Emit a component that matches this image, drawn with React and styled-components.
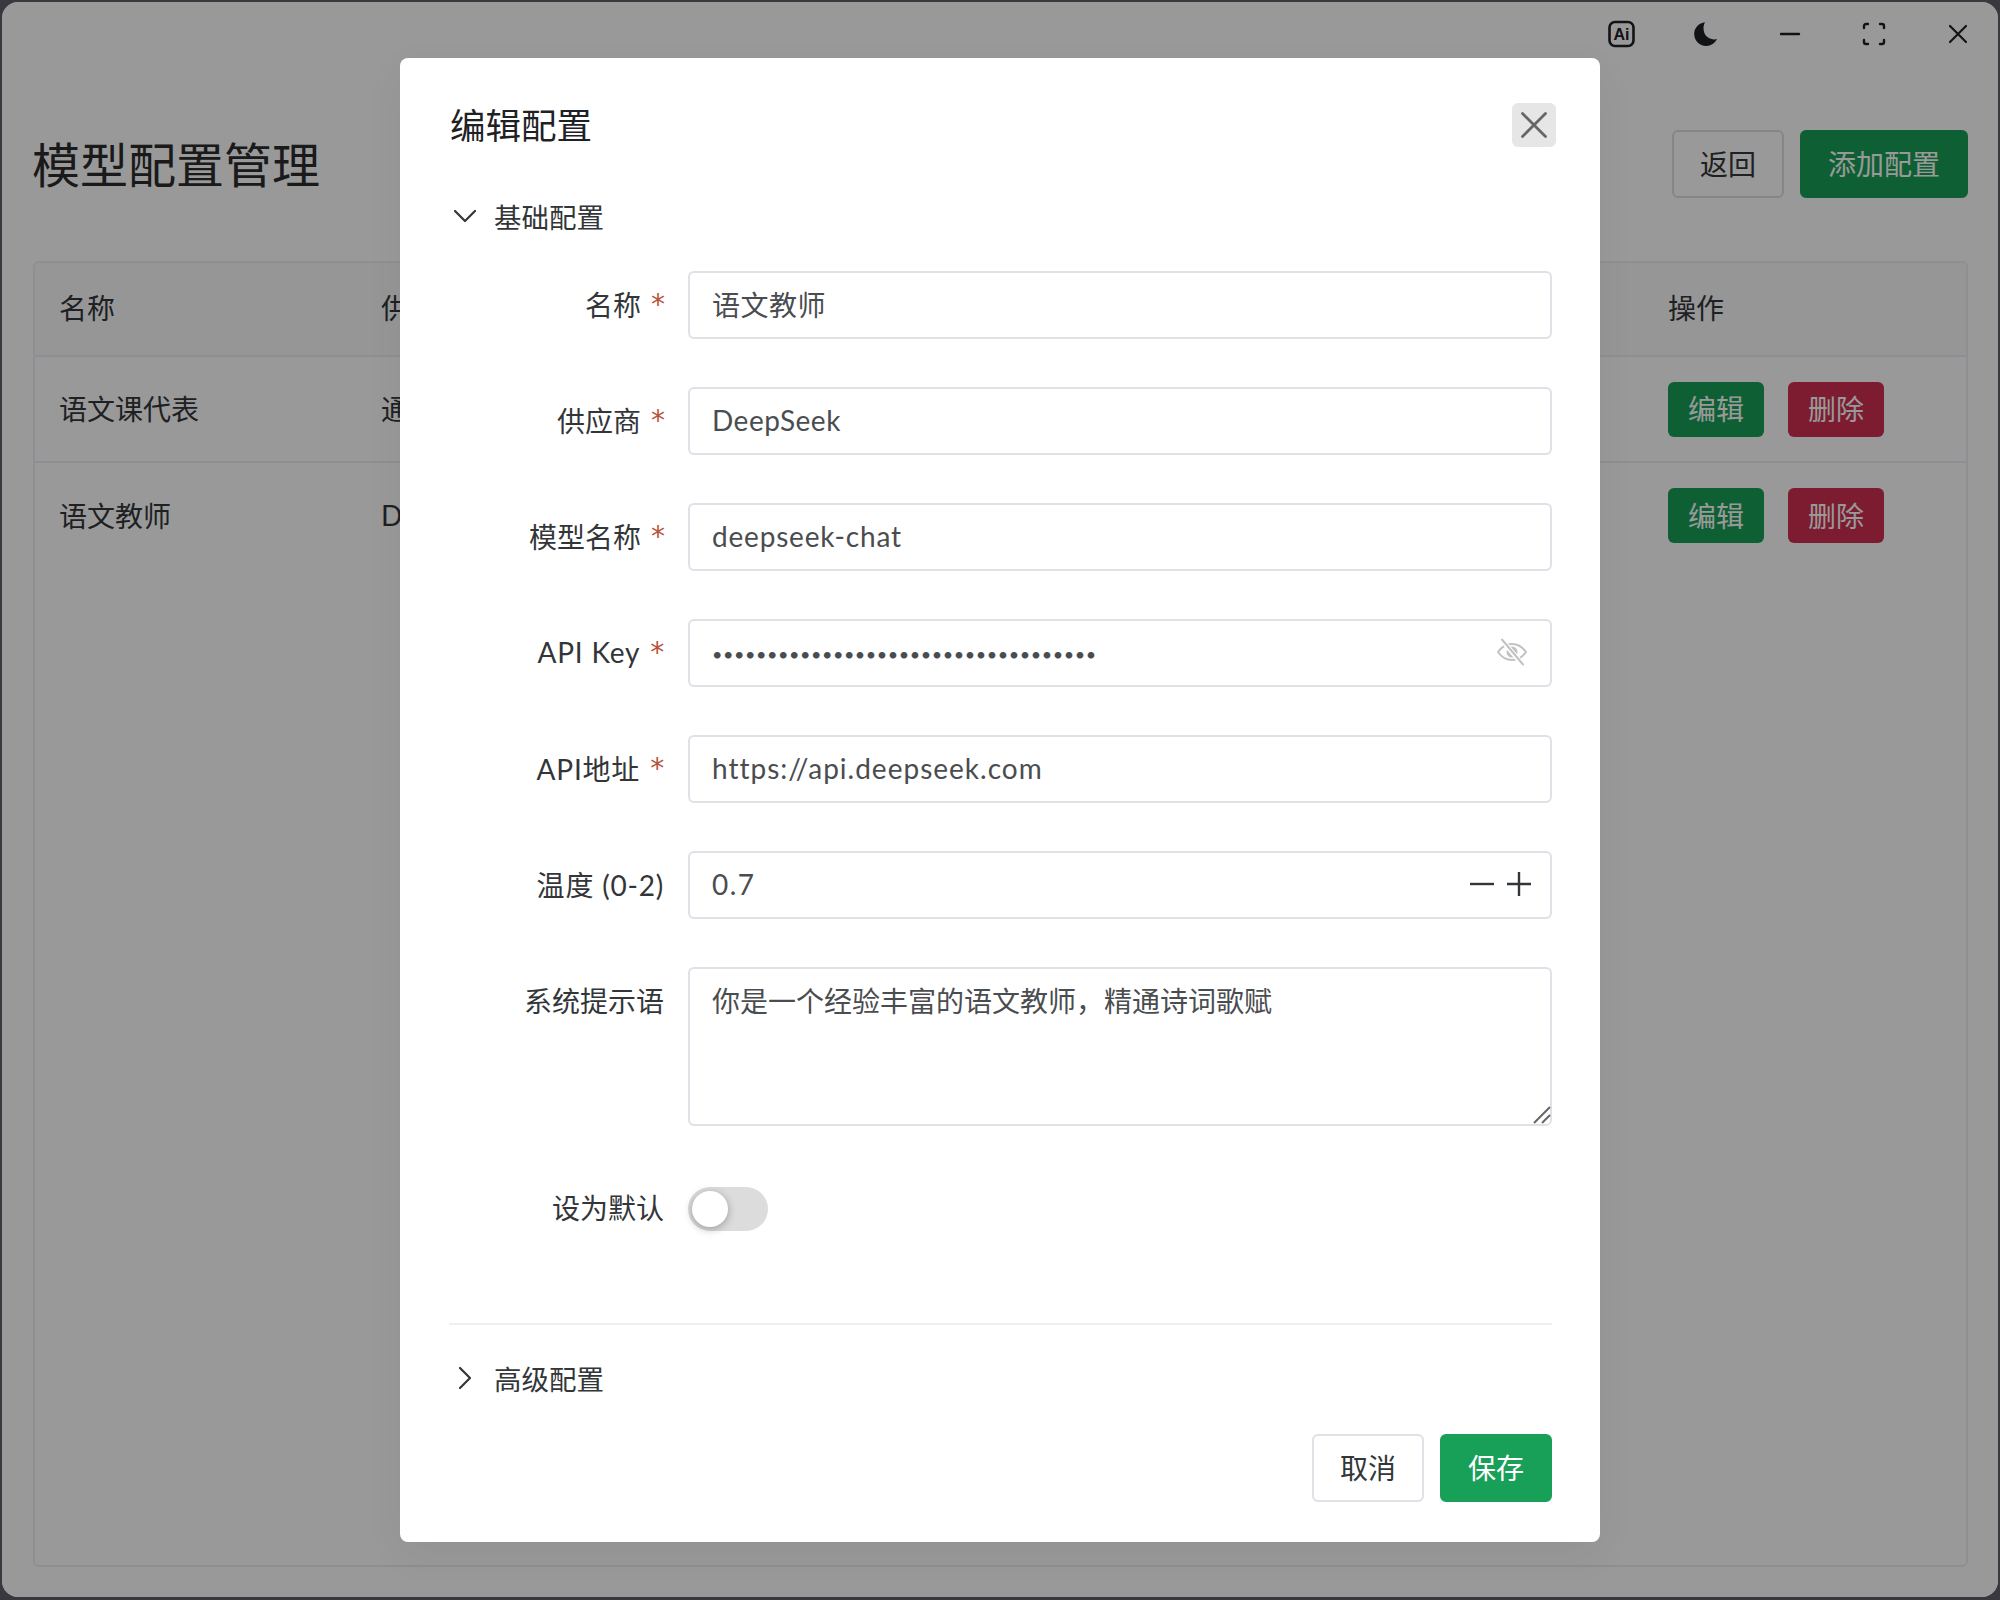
import React from "react";
import styled, { createGlobalStyle } from "styled-components";

const FONT = `Lato, "Noto Sans CJK SC", sans-serif`;

const GlobalStyle = createGlobalStyle`
  html, body {
    margin: 0;
    padding: 0;
    height: 100%;
    background: #38383e;
  }
  body {
    font-family: ${FONT};
    font-size: 28px;
    color: #333639;
  }
  #root {
    height: 100%;
  }
  * {
    box-sizing: border-box;
  }
`;

const MODELS = [
  { name: "语文课代表", provider: "通义千问" },
  { name: "语文教师", provider: "DeepSeek" },
];

// full-width comma, as in the original text
const PROMPT = "你是一个经验丰富的语文教师\uFF0C精通诗词歌赋";

export default function App() {
  return (
    <Shell>
      <GlobalStyle />
      <Win>
        <TitleBar>
          <WinBtn aria-label="ai">
            <svg width="30" height="30" viewBox="0 0 30 30">
              <rect x="2.5" y="3" width="24" height="24" rx="5.5" fill="none" stroke="currentColor" strokeWidth="2.6" />
              <text x="14.5" y="21" textAnchor="middle" fontFamily="Liberation Sans, sans-serif" fontSize="16" fontWeight="700" fill="currentColor">Ai</text>
            </svg>
          </WinBtn>
          <WinBtn aria-label="theme">
            <svg width="30" height="30" viewBox="0 0 30 30">
              <path d="M14 3.2C8 3.8 3.2 8.6 3.2 15c0 6.600 5.400 12 12 12 4.800 0 8.900-2.800 10.800-6.900-5.900 1.200-11-1.600-12.700-6.300C12 10 12.300 6 14 3.200Z" fill="currentColor" />
            </svg>
          </WinBtn>
          <WinBtn aria-label="minimize">
            <svg width="24" height="24" viewBox="0 0 24 24">
              <path d="M3 12h18" stroke="currentColor" strokeWidth="2.4" strokeLinecap="round" />
            </svg>
          </WinBtn>
          <WinBtn aria-label="fullscreen">
            <svg width="26" height="26" viewBox="0 0 26 26" fill="none" stroke="currentColor" strokeWidth="2.4" strokeLinecap="round">
              <path d="M7 3H5a2 2 0 0 0-2 2v2" />
              <path d="M19 3h2a2 2 0 0 1 2 2v2" />
              <path d="M3 19v2a2 2 0 0 0 2 2h2" />
              <path d="M23 19v2a2 2 0 0 1-2 2h-2" />
            </svg>
          </WinBtn>
          <WinBtn aria-label="close">
            <svg width="24" height="24" viewBox="0 0 24 24">
              <path d="M4 4l16 16M20 4L4 20" stroke="currentColor" strokeWidth="2.2" strokeLinecap="round" />
            </svg>
          </WinBtn>
        </TitleBar>

        <PageHeader>
          <PageTitle>模型配置管理</PageTitle>
          <Actions>
            <Button>返回</Button>
            <Button $primary $wide>添加配置</Button>
          </Actions>
        </PageHeader>

        <TableWrap>
          <Table>
            <colgroup>
              <col width="322" />
              <col />
              <col width="322" />
            </colgroup>
            <thead>
              <tr>
                <Th>名称</Th>
                <Th>供应商</Th>
                <Th>操作</Th>
              </tr>
            </thead>
            <tbody>
              {MODELS.map((m) => (
                <tr key={m.name}>
                  <Td>{m.name}</Td>
                  <Td>{m.provider}</Td>
                  <Td>
                    <RowActions>
                      <SmallButton $color="#18a058">编辑</SmallButton>
                      <SmallButton $color="#d03050">删除</SmallButton>
                    </RowActions>
                  </Td>
                </tr>
              ))}
            </tbody>
          </Table>
        </TableWrap>

        <Overlay>
          <Dialog>
            <DialogHead>
              <DialogTitle>编辑配置</DialogTitle>
              <CloseBtn aria-label="关闭">
                <svg width="30" height="30" viewBox="0 0 30 30">
                  <path d="M3.500 3.500l23 23M26.500 3.500l-23 23" stroke="currentColor" strokeWidth="2.8" strokeLinecap="round" />
                </svg>
              </CloseBtn>
            </DialogHead>

            <CollapseHead $top>
              <Chevron>
                <svg width="24" height="24" viewBox="0 0 24 24">
                  <path d="M2 7l10 10L22 7" fill="none" stroke="currentColor" strokeWidth="2.200" strokeLinecap="round" strokeLinejoin="round" />
                </svg>
              </Chevron>
              基础配置
            </CollapseHead>

            <Form>
              <Field>
                <Label $required>名称</Label>
                <InputBox>
                  <Input readOnly value="语文教师" />
                </InputBox>
              </Field>
              <Field>
                <Label $required>供应商</Label>
                <InputBox>
                  <Input readOnly value="DeepSeek" />
                </InputBox>
              </Field>
              <Field>
                <Label $required>模型名称</Label>
                <InputBox>
                  <Input readOnly $track="0.8px" value="deepseek-chat" />
                </InputBox>
              </Field>
              <Field>
                <Label $required $spaced>API Key</Label>
                <InputBox>
                  <PasswordInput readOnly type="password" value="sk-0123456789abcdef0123456789abcdef" />
                  <EyeIcon>
                    <svg width="32" height="32" viewBox="0 0 32 32" fill="none" stroke="currentColor" strokeWidth="2" strokeLinecap="round">
                      <path d="M2 16c3.500-5 8-8 14-8s10.500 3 14 8c-3.500 5-8 8-14 8S5.500 21 2 16Z" />
                      <circle cx="16" cy="16" r="5.500" fill="currentColor" stroke="none" />
                      <path d="M5 3l22 26" stroke="#fff" strokeWidth="5" />
                      <path d="M6 3.500l21 25" />
                    </svg>
                  </EyeIcon>
                </InputBox>
              </Field>
              <Field>
                <Label $required $spaced>API地址</Label>
                <InputBox>
                  <Input readOnly $track="1px" value="https://api.deepseek.com" />
                </InputBox>
              </Field>
              <Field>
                <Label $spaced>温度 (0-2)</Label>
                <InputBox>
                  <Input readOnly $track="1.5px" value="0.7" />
                  <Stepper>
                    <svg width="24" height="24" viewBox="0 0 24 24">
                      <path d="M0 12h24" stroke="currentColor" strokeWidth="2.400" />
                    </svg>
                    <svg width="24" height="24" viewBox="0 0 24 24">
                      <path d="M0 12h24M12 0v24" stroke="currentColor" strokeWidth="2.400" />
                    </svg>
                  </Stepper>
                </InputBox>
              </Field>
              <Field>
                <Label>系统提示语</Label>
                <TextAreaBox>
                  <TextArea readOnly value={PROMPT} />
                  <ResizeHandle width="18" height="18" viewBox="0 0 18 18">
                    <path d="M1 17L17 1M9 17l8-8" stroke="#666" strokeWidth="2" />
                  </ResizeHandle>
                </TextAreaBox>
              </Field>
              <Field $last>
                <Label>设为默认</Label>
                <Switch>
                  <SwitchKnob />
                </Switch>
              </Field>
            </Form>

            <Divider />

            <CollapseHead>
              <Chevron>
                <svg width="24" height="24" viewBox="0 0 24 24">
                  <path d="M7 2l10 10L7 22" fill="none" stroke="currentColor" strokeWidth="2.200" strokeLinecap="round" strokeLinejoin="round" />
                </svg>
              </Chevron>
              高级配置
            </CollapseHead>

            <DialogFooter>
              <Button>取消</Button>
              <Button $primary>保存</Button>
            </DialogFooter>
          </Dialog>
        </Overlay>
      </Win>
    </Shell>
  );
}

const Shell = styled.div`
  height: 100%;
  padding: 2px 2px 3px;
`;

const Win = styled.div`
  position: relative;
  height: 100%;
  background: #fff;
  border-radius: 16px;
  overflow: hidden;
  display: flex;
  flex-direction: column;
`;

const TitleBar = styled.div`
  height: 64px;
  padding-right: 18px;
  display: flex;
  align-items: center;
  justify-content: flex-end;
  gap: 40px;
`;

const WinBtn = styled.div`
  width: 44px;
  height: 44px;
  display: flex;
  align-items: center;
  justify-content: center;
  color: #1f2026;
`;

const PageHeader = styled.div`
  height: 68px;
  margin-top: 64px;
  padding: 0 30px 0 31px;
  display: flex;
  align-items: center;
  justify-content: space-between;
`;

const PageTitle = styled.h1`
  margin: 0 0 5px -1px;
  font-size: 48px;
  font-weight: 400;
  color: #2c2c2c;
`;

const Actions = styled.div`
  display: flex;
  gap: 16px;
`;

const Button = styled.button`
  width: ${({ $wide }) => ($wide ? "168px" : "112px")};
  height: 68px;
  padding: 0 0 2px;
  border-radius: 6px;
  border: 2px solid ${({ $primary }) => ($primary ? "#18a058" : "#e0e0e6")};
  background: ${({ $primary }) => ($primary ? "#18a058" : "#fff")};
  color: ${({ $primary }) => ($primary ? "#fff" : "#333639")};
  font-family: ${FONT};
  font-size: 28px;
`;

const TableWrap = styled.div`
  flex: 1;
  margin: 63px 30px 30px 31px;
  border: 2px solid #efeff5;
  border-radius: 6px;
  overflow: hidden;
`;

const Table = styled.table`
  width: 100%;
  table-layout: fixed;
  border-collapse: collapse;
`;

const Th = styled.th`
  height: 93px;
  padding: 0 24px 4px;
  background: #fafafc;
  border-bottom: 2px solid #efeff5;
  text-align: left;
  font-weight: 400;
`;

const Td = styled.td`
  height: 106px;
  padding: 0 24px 2px;
  border-bottom: 2px solid #efeff5;

  tr:last-child & {
    border-bottom: none;
  }
`;

const RowActions = styled.div`
  margin-top: 2px;
  display: flex;
  gap: 24px;
`;

const SmallButton = styled.button`
  width: 96px;
  height: 55px;
  padding: 0 0 2px;
  border: none;
  border-radius: 6px;
  background: ${({ $color }) => $color};
  color: #fff;
  font-family: ${FONT};
  font-size: 28px;
`;

const Overlay = styled.div`
  position: absolute;
  inset: 0;
  padding-top: 1px;
  background: rgba(0, 0, 0, 0.4);
  display: flex;
  align-items: center;
  justify-content: center;
`;

const Dialog = styled.div`
  width: 1200px;
  padding: 45px 48px 40px 49px;
  background: #fff;
  border-radius: 8px;
  box-shadow: 0 12px 40px rgba(0, 0, 0, 0.05);
`;

const DialogHead = styled.div`
  height: 44px;
  display: flex;
  align-items: center;
  justify-content: space-between;
`;

const DialogTitle = styled.h2`
  margin: 0 0 0 1px;
  padding-bottom: 4px;
  font-size: 35.5px;
  font-weight: 400;
  color: #1f2225;
`;

const CloseBtn = styled.div`
  width: 44px;
  height: 44px;
  margin-right: -4px;
  border-radius: 6px;
  background: #e6e6e6;
  color: #666;
  display: flex;
  align-items: center;
  justify-content: center;
`;

const CollapseHead = styled.div`
  height: 40px;
  margin-top: ${({ $top }) => ($top ? "49px" : "33px")};
  display: flex;
  align-items: center;
  color: #333639;
  font-size: 27.5px;
`;

const Chevron = styled.span`
  width: 32px;
  margin-right: 13px;
  display: flex;
  justify-content: center;
  color: #333639;
`;

const Form = styled.div`
  margin-top: 35px;
`;

const Field = styled.div`
  display: flex;
  align-items: flex-start;
  margin-bottom: ${({ $last }) => ($last ? "81px" : "48px")};
`;

const Label = styled.label`
  flex: 0 0 215px;
  height: 68px;
  padding-bottom: 2px;
  display: flex;
  align-items: center;
  justify-content: flex-end;
  margin-right: 24px;
  letter-spacing: ${({ $spaced }) => ($spaced ? "0.8px" : "0")};

  ${({ $required }) =>
    $required &&
    `&::after {
      content: "*";
      margin: 0 -1px 0 10px;
      font-family: "DejaVu Sans", sans-serif;
      color: #b5533c;
    }`}
`;

const InputBox = styled.div`
  flex: 1;
  height: 68px;
  padding: 0 22px 2px;
  border: 2px solid #e0e0e6;
  border-radius: 6px;
  display: flex;
  align-items: center;
`;

const Input = styled.input`
  flex: 1;
  min-width: 0;
  padding: 0;
  border: none;
  outline: none;
  background: transparent;
  color: #4a4d50;
  letter-spacing: ${({ $track }) => $track || "0.5px"};
  font-family: ${FONT};
  font-size: 28px;
`;

const PasswordInput = styled(Input)`
  margin-top: 4px;
  letter-spacing: 0.55px;
  font-size: 18px;
`;

const EyeIcon = styled.span`
  display: flex;
  color: #c2c2c2;
`;

const Stepper = styled.span`
  display: flex;
  gap: 13px;
  margin-right: -3px;
  color: #333639;
`;

const TextAreaBox = styled.div`
  position: relative;
  flex: 1;
  height: 159px;
  display: flex;
`;

const TextArea = styled.textarea`
  flex: 1;
  padding: 13px 22px;
  border: 2px solid #e0e0e6;
  border-radius: 6px;
  outline: none;
  resize: none;
  color: #4a4d50;
  line-height: 1.4;
  font-family: ${FONT};
  font-size: 28px;
`;

const ResizeHandle = styled.svg`
  position: absolute;
  right: 1px;
  bottom: 2px;
`;

const Switch = styled.div`
  position: relative;
  width: 80px;
  height: 44px;
  margin-top: 13px;
  border-radius: 22px;
  background: #dcdcdc;
`;

const SwitchKnob = styled.span`
  position: absolute;
  top: 4px;
  left: 4px;
  width: 36px;
  height: 36px;
  border-radius: 50%;
  background: #fff;
  box-shadow: 0 2px 8px rgba(0, 0, 0, 0.3);
`;

const Divider = styled.div`
  height: 2px;
  background: #efeff5;
`;

const DialogFooter = styled.div`
  margin-top: 36px;
  display: flex;
  justify-content: flex-end;
  gap: 16px;
`;
